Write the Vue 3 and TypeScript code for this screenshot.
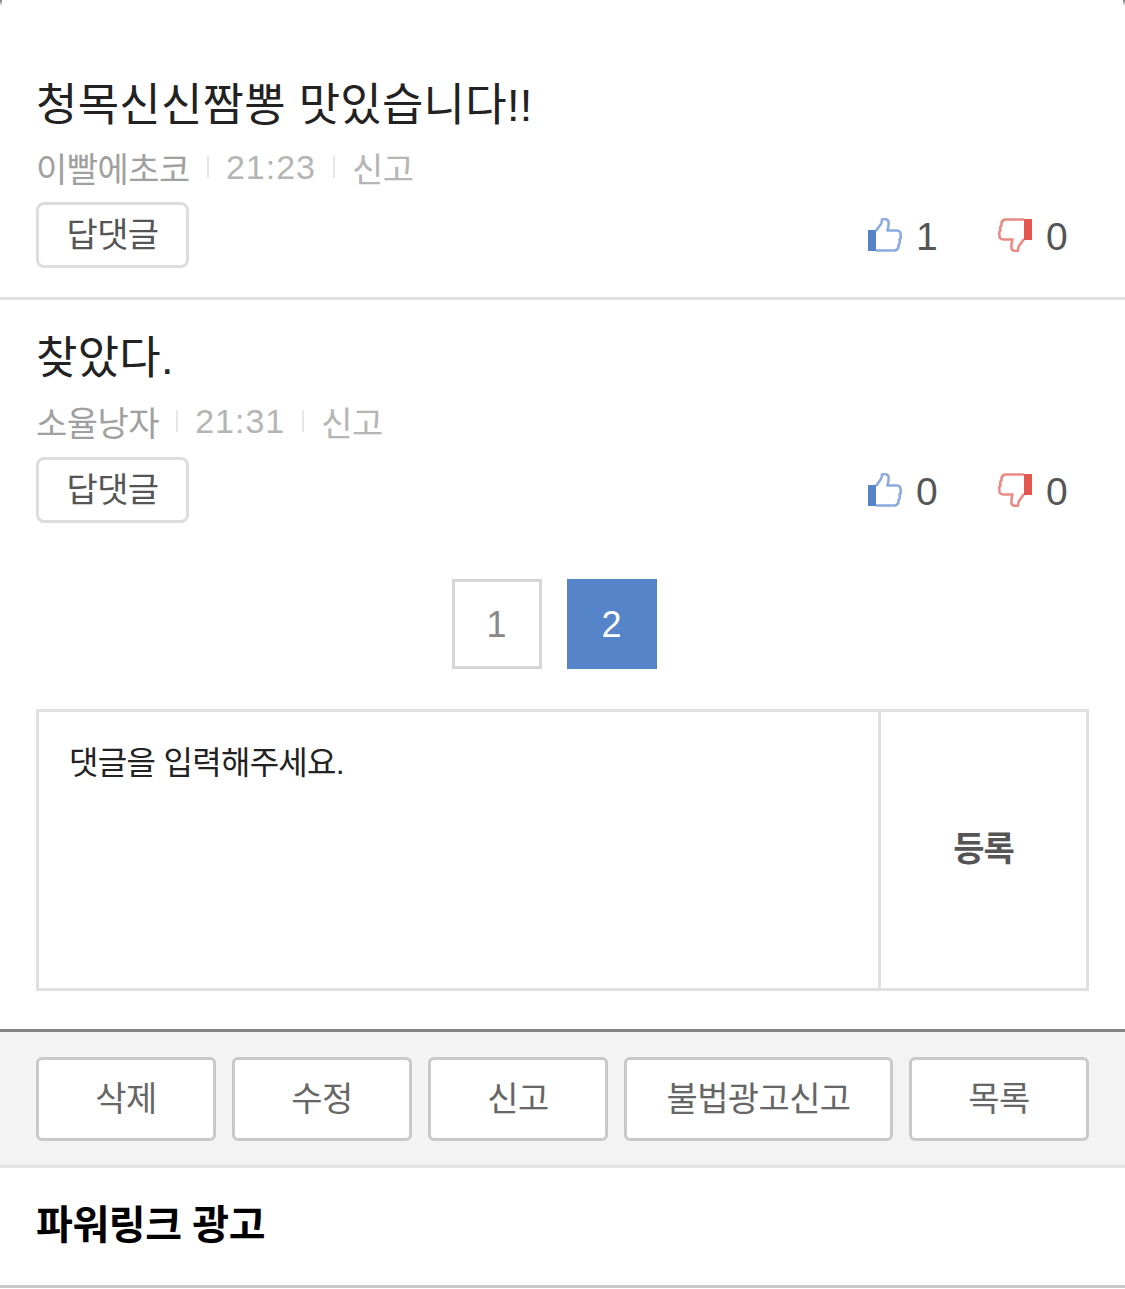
<template>
  <div class="page">
    <div class="comments">
      <div v-for="(c, i) in comments" :key="i" class="comment" :class="{ first: i === 0 }">
        <div class="title">{{ c.title }}</div>
        <div class="meta">
          <span>{{ c.author }}</span>
          <i class="sep"></i>
          <span class="time">{{ c.time }}</span>
          <i class="sep"></i>
          <span class="light">신고</span>
        </div>
        <div class="actions">
          <button class="reply">답댓글</button>
          <div class="votes">
            <div class="vote">
              <svg width="34" height="34" viewBox="0 0 34 34">
                <path d="M8 13L13 6Q14 4 14 1.5Q17 0 20 2.5Q21.5 5 19.5 12.5H29Q33 13 32.5 16.5Q33.5 20 31.5 21.5Q32.5 25 30.5 27Q31 31.5 27 32.5H8" fill="#fff" stroke="#8aabdc" stroke-width="2.6" stroke-linejoin="round" />
                <path d="M0 12h8v21H0z" fill="#5584c9" />
              </svg>
              <span>{{ c.up }}</span>
            </div>
            <div class="vote">
              <svg width="34" height="34" viewBox="0 0 34 34">
                <g transform="rotate(180 17 17)">
                  <path d="M8 13L13 6Q14 4 14 1.5Q17 0 20 2.5Q21.5 5 19.5 12.5H29Q33 13 32.5 16.5Q33.5 20 31.5 21.5Q32.5 25 30.5 27Q31 31.5 27 32.5H8" fill="#fff" stroke="#ea8a84" stroke-width="2.6" stroke-linejoin="round" />
                  <path d="M0 12h8v21H0z" fill="#e4574e" />
                </g>
              </svg>
              <span>{{ c.down }}</span>
            </div>
          </div>
        </div>
      </div>
    </div>

    <div class="pager">
      <span class="pg">1</span>
      <span class="pg on">2</span>
    </div>

    <div class="write">
      <div class="input">댓글을 입력해주세요.</div>
      <div class="submit">등록</div>
    </div>

    <div class="toolbar">
      <button v-for="b in buttons" :key="b.label" class="tool" :style="{ flexGrow: b.grow }">{{ b.label }}</button>
    </div>

    <div class="ad">파워링크 광고</div>
  </div>
</template>

<script setup lang="ts">
const comments = [
  { title: '청목신신짬뽕 맛있습니다!!', author: '이빨에초코', time: '21:23', up: 1, down: 0 },
  { title: '찾았다.', author: '소율낭자', time: '21:31', up: 0, down: 0 },
]

const buttons = [
  { label: '삭제', grow: 174 },
  { label: '수정', grow: 174 },
  { label: '신고', grow: 174 },
  { label: '불법광고신고', grow: 263 },
  { label: '목록', grow: 174 },
]
</script>

<style>
html,
body {
  margin: 0;
  background: #fff;
}
</style>

<style scoped>
.page {
  position: relative;
  width: 1125px;
  height: 1289px;
  overflow: hidden;
  font-family: "Liberation Sans", "Noto Sans CJK KR", sans-serif;
  color: #222;
}

/* dark slivers in the two top corners */
.page::before,
.page::after {
  content: "";
  position: absolute;
  top: 0;
  width: 2px;
  height: 6px;
  background: linear-gradient(#777, rgba(119, 119, 119, 0));
}

.page::before {
  left: 0;
}

.page::after {
  right: 0;
}

.comment {
  box-sizing: border-box;
  height: 300px;
  padding: 0 36px;
}

.comment + .comment {
  height: 250px;
  padding-top: 27px;
  border-top: 3px solid #e3e3e3;
  margin-top: -3px;
}

.comment + .comment .meta {
  margin-top: 10px;
}

.comment + .comment .actions {
  margin-top: 16px;
}

.comment.first {
  padding-top: 74px;
}

.title {
  font-size: 45px;
  line-height: 64px;
  letter-spacing: 0.25px;
  color: #222;
}

.meta {
  display: flex;
  align-items: center;
  height: 40px;
  margin-top: 9px;
  font-size: 34px;
  letter-spacing: -0.5px;
  color: #a0a0a0;
}

.meta .light {
  color: #b5b5b5;
}

.meta .time {
  color: #b5b5b5;
  letter-spacing: 1px;
}

.sep {
  width: 2px;
  height: 22px;
  background: #e6e6e6;
  margin: 0 17px;
}

.actions {
  display: flex;
  align-items: center;
  justify-content: space-between;
  margin-top: 15px;
}

.reply {
  width: 153px;
  height: 66px;
  padding: 0 0 5px;
  background: #fff;
  border: 3px solid #ddd;
  border-radius: 8px;
  font: inherit;
  font-size: 34px;
  letter-spacing: -0.6px;
  color: #555;
}

.votes {
  display: flex;
  gap: 46px;
  padding-right: 7px;
}

.vote {
  display: flex;
  align-items: center;
  gap: 14px;
  width: 84px;
  font-size: 39px;
  color: #555;
}

.vote span {
  padding-top: 3px;
}

.pager {
  display: flex;
  justify-content: center;
  gap: 25px;
  margin-top: 32px;
  padding-right: 17px;
}

.pg {
  box-sizing: border-box;
  width: 90px;
  height: 90px;
  padding-top: 1px;
  display: flex;
  align-items: center;
  justify-content: center;
  border: 3px solid #d6d6d6;
  font-size: 36px;
  color: #888;
}

.pg.on {
  background: #5584c9;
  border-color: #5584c9;
  color: #fff;
}

.write {
  display: flex;
  box-sizing: border-box;
  height: 282px;
  margin: 40px 36px 0;
  border: 3px solid #e0e0e0;
}

.input {
  flex: 1;
  padding: 29px 30px;
  font-size: 32px;
  line-height: 44px;
  letter-spacing: -0.7px;
  color: #222;
}

.submit {
  width: 205px;
  padding-bottom: 7px;
  display: flex;
  align-items: center;
  justify-content: center;
  border-left: 3px solid #e0e0e0;
  font-size: 34px;
  font-weight: 700;
  letter-spacing: -1px;
  color: #555;
}

.toolbar {
  display: flex;
  gap: 16px;
  box-sizing: border-box;
  height: 139px;
  margin-top: 38px;
  padding: 25px 36px;
  background: #f3f3f3;
  border-top: 3px solid #858585;
  border-bottom: 3px solid #e3e3e3;
}

.tool {
  flex: 1 1 0;
  padding: 0 0 5px;
  height: 84px;
  background: #fff;
  border: 3px solid #c9c9c9;
  border-radius: 6px;
  font: inherit;
  font-size: 34px;
  letter-spacing: -0.6px;
  color: #666;
}

.ad {
  box-sizing: border-box;
  height: 120px;
  padding: 0 36px 10px;
  display: flex;
  align-items: center;
  border-bottom: 3px solid #c8c8c8;
  font-size: 40px;
  font-weight: 700;
  letter-spacing: -0.4px;
  color: #000;
}
</style>
